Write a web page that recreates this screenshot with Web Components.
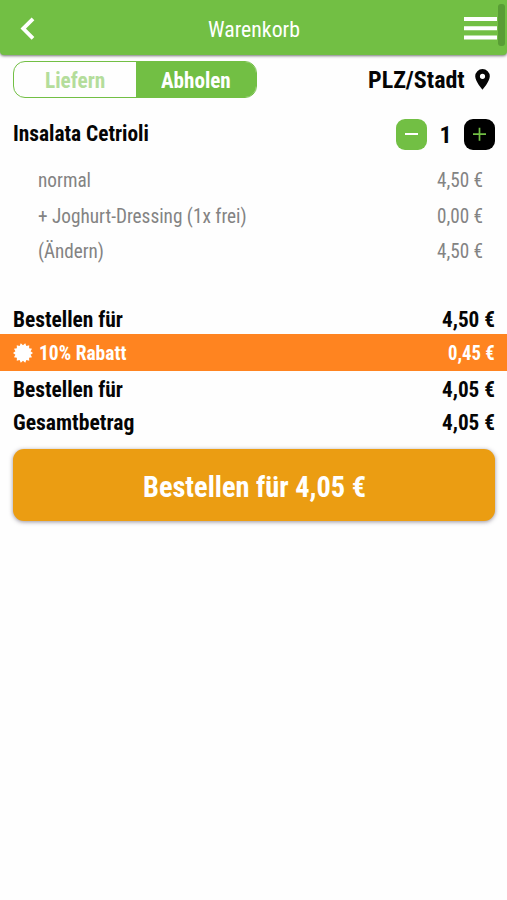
<!DOCTYPE html>
<html lang="de">
<head>
<meta charset="utf-8">
<title>Warenkorb</title>
<style>
:root {
	--green: #72bf44;
	--orange: #ff8420;
	--gold: #eb9d12;
	--grey: #838383;
}

body {
	margin: 0;
	background: #fefefe;
	color: #050505;
	font-family: 'Roboto', sans-serif;
	font-stretch: 75%;
	overflow: hidden;
}
</style>
</head>
<body>

<cart-page></cart-page>

<!--      TEMPLATES       -->

<template id="bar-template">
<style>
:host {
	display: grid;
	grid-template-columns: 1fr auto 1fr;
	align-items: center;
	position: relative;
	box-sizing: border-box;
	height: 55px;
	padding: 3px 10px 0 20px;
	background: var(--green);
	color: #fff;
	font-size: 22px;
	border-radius: 0 0 4px 4px;
	box-shadow: 0 1px 3px rgba(0,0,0,0.55);
}
svg { display: block; }
.title { padding: 2px 10px 0 0; }
.menu { justify-self: end; }
.thumb {
	position: absolute;
	top: 4px;
	right: 2px;
	width: 7px;
	height: 42px;
	border-radius: 3px;
	background: #599d35;
}
</style>
<svg width="16" height="24" viewBox="0 0 16 24" fill="none" stroke="#fff" stroke-width="3.8"><path d="M13 1.8 3.2 11.6 13 21.3"/></svg>
<div class="title"><slot></slot></div>
<svg class="menu" width="33" height="24" viewBox="0 0 33 24" fill="#fff"><path d="M0 0h33v4H0zM0 9.3h33v4H0zM0 18.6h33v4H0z"/></svg>
<div class="thumb"></div>
</template>

<template id="switch-template">
<style>
:host {
	display: flex;
	box-sizing: border-box;
	width: 244px;
	height: 37px;
	border: 1px solid var(--green);
	border-radius: 12px;
	overflow: hidden;
	font-size: 22px;
	font-weight: 700;
}
div {
	display: flex;
	align-items: center;
	justify-content: center;
	padding-top: 4px;
}
.off { width: 122px; color: #b4dd9b; }
.on { flex: 1; background: var(--green); color: #fff; }
</style>
<div class="off"><slot name="off"></slot></div>
<div class="on"><slot name="on"></slot></div>
</template>

<template id="row-template">
<style>
:host {
	display: flex;
	align-items: center;
	justify-content: space-between;
	box-sizing: border-box;
	height: 33px;
	padding: 5px 12px 0 13px;
	font-size: 22px;
	font-weight: 700;
}
:host([option]) {
	height: 35.4px;
	padding: 0 24px 0 37.5px;
	color: var(--grey);
	font-size: 20px;
	font-weight: 400;
}
:host([discount]) {
	height: 37px;
	padding: 3px 12px 0 13px;
	background: var(--orange);
	color: #fff;
	font-size: 19.5px;
}
.label { display: flex; align-items: center; gap: 6px; }
::slotted(svg) { margin-top: -2px; }
</style>
<div class="label"><slot name="icon"></slot><slot></slot></div>
<slot name="price"></slot>
</template>

<template id="stepper-template">
<style>
:host { display: flex; align-items: center; }
.box {
	display: grid;
	place-items: center;
	width: 31px;
	height: 31px;
	border-radius: 9px;
	background: var(--green);
}
.plus { background: #000; }
.count { width: 37px; display: flex; justify-content: center; padding-top: 2px; font-size: 24px; }
</style>
<div class="box"><svg width="15" height="15" viewBox="0 0 15 15" stroke="#fff" stroke-width="2"><path d="M1 7h13"/></svg></div>
<div class="count"><slot></slot></div>
<div class="box plus"><svg width="15" height="15" viewBox="0 0 15 15" stroke="#72bf44" stroke-width="1.7"><path d="M1 7.2h13M7.5.7v13"/></svg></div>
</template>

<template id="button-template">
<style>
:host {
	display: flex;
	align-items: center;
	justify-content: center;
	box-sizing: border-box;
	height: 72px;
	margin: 12.5px 12px 0 13px;
	padding-top: 4px;
	border-radius: 11px;
	background: var(--gold);
	color: #fff;
	font-size: 29px;
	font-weight: 700;
	box-shadow: 0 1px 4px rgba(50,40,60,0.5);
}
</style>
<slot></slot>
</template>

<template id="page-template">
<style>
:host { display: block; height: 900px; }
.place {
	display: flex;
	align-items: center;
	justify-content: space-between;
	height: 37px;
	padding: 5.5px 17px 0 13px;
}
.city { display: flex; align-items: center; gap: 10px; font-size: 24px; font-weight: 700; }
.city fit-text { padding-top: 2px; }
.city svg { margin-top: 2px; }
.item {
	display: flex;
	align-items: center;
	justify-content: space-between;
	height: 36px;
	margin-top: 19px;
	padding: 0 12px 0 13px;
	font-size: 22px;
	font-weight: 700;
}
.options { padding: 10.3px 0 32px; }
svg { display: block; }
</style>
<top-bar><fit-text w="92">Warenkorb</fit-text></top-bar>
<div class="place">
	<order-switch><fit-text slot="off" w="60">Liefern</fit-text><fit-text slot="on" w="70">Abholen</fit-text></order-switch>
	<div class="city">
		<fit-text w="97">PLZ/Stadt</fit-text>
		<svg width="15" height="21" viewBox="0 0 15 21"><path fill="#050505" fill-rule="evenodd" d="M7.5 0A7.3 7.3 0 0 0 .2 7.3C.2 12.6 7.5 20.7 7.5 20.7S14.8 12.6 14.8 7.3A7.3 7.3 0 0 0 7.5 0zm0 4.7a2.6 2.6 0 1 1 0 5.2 2.6 2.6 0 0 1 0-5.2z"/></svg>
	</div>
</div>
<div class="item">
	<fit-text w="136">Insalata Cetrioli</fit-text>
	<count-stepper><fit-text w="12">1</fit-text></count-stepper>
</div>
<div class="options">
	<price-row option><fit-text w="53">normal</fit-text><fit-text slot="price" w="46">4,50 €</fit-text></price-row>
	<price-row option><fit-text w="209">+ Joghurt-Dressing (1x frei)</fit-text><fit-text slot="price" w="46">0,00 €</fit-text></price-row>
	<price-row option><fit-text w="66">(Ändern)</fit-text><fit-text slot="price" w="46">4,50 €</fit-text></price-row>
</div>
<price-row><fit-text w="110">Bestellen für</fit-text><fit-text slot="price" w="53">4,50 €</fit-text></price-row>
<price-row discount>
	<svg slot="icon" id="seal" width="20" height="20" viewBox="-10 -10 20 20"><polygon fill="#fff"/></svg>
	<fit-text w="87">10% Rabatt</fit-text><fit-text slot="price" w="47">0,45 €</fit-text>
</price-row>
<price-row><fit-text w="110">Bestellen für</fit-text><fit-text slot="price" w="53">4,05 €</fit-text></price-row>
<price-row><fit-text w="121">Gesamtbetrag</fit-text><fit-text slot="price" w="53">4,05 €</fit-text></price-row>
<order-button><fit-text w="223">Bestellen für 4,05 €</fit-text></order-button>
</template>

<script>
/* Squeezes one line of text to the width in its w attribute,
   so the regular Roboto can stand in for a condensed cut */
class FitText extends HTMLElement {
	constructor() {
		super();
		this.attachShadow({mode: 'open'}).innerHTML = `
		<style>
		:host { display: block; flex: none; line-height: 1.2; white-space: nowrap; }
		span { display: inline-block; transform-origin: 0 50%; }
		</style><span><slot></slot></span>`;
	}
	connectedCallback() {
		const w = Number(this.getAttribute('w'));
		const span = this.shadowRoot.querySelector('span');
		this.style.width = w + 'px';
		span.style.transform = `scaleX(${w / span.offsetWidth})`;
	}
}

/* The other elements only need their template */
function define(name, id) {
	customElements.define(name, class extends HTMLElement {
		constructor() {
			super();
			const shadowRoot = this.attachShadow({mode: 'open'});
			shadowRoot.appendChild(document.querySelector(id).content.cloneNode(true));
		}
	});
}

define('top-bar', '#bar-template');
define('order-switch', '#switch-template');
define('price-row', '#row-template');
define('count-stepper', '#stepper-template');
define('order-button', '#button-template');
define('cart-page', '#page-template');

/* fit-text goes last: it measures itself with the fonts of its parents */
customElements.define('fit-text', FitText);

/* Fourteen teeth round the discount seal */
const seal = document.querySelector('cart-page').shadowRoot.querySelector('#seal polygon');
const points = [];
for (let i = 0; i < 28; i++) {
	const r = i % 2 ? 7.8 : 10;
	const a = i * Math.PI / 14;
	points.push((r * Math.cos(a)).toFixed(2) + ',' + (r * Math.sin(a)).toFixed(2));
}
seal.setAttribute('points', points.join(' '));
</script>
</body>
</html>
